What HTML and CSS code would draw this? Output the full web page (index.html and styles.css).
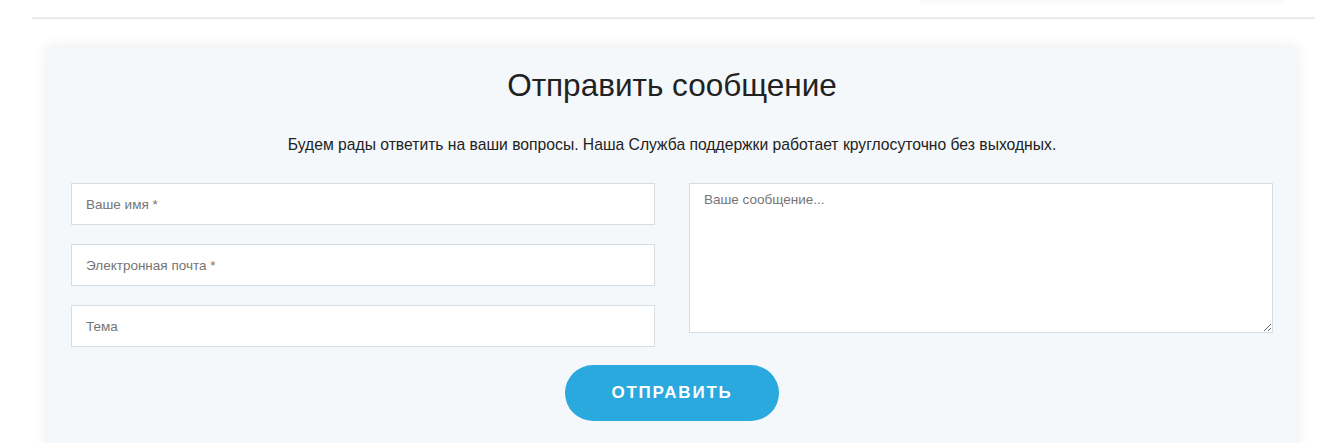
FILE: index.html
```html
<!DOCTYPE html>
<html lang="ru">
<head>
<meta charset="utf-8">
<title>Отправить сообщение</title>
<link rel="stylesheet" href="styles.css">
</head>
<body>
<div class="topbar"><div class="topbar-ghost"></div></div>
<div class="divider"></div>
<section class="card">
  <h2 class="title">Отправить сообщение</h2>
  <p class="subtitle">Будем рады ответить на ваши вопросы. Наша Служба поддержки работает круглосуточно без выходных.</p>
  <form class="form">
    <div class="fields">
      <input class="field" type="text" placeholder="Ваше имя *">
      <input class="field" type="email" placeholder="Электронная почта *">
      <input class="field" type="text" placeholder="Тема">
    </div>
    <textarea class="message" placeholder="Ваше сообщение..."></textarea>
  </form>
  <div class="actions"><button class="send" type="button">ОТПРАВИТЬ</button></div>
</section>
</body>
</html>
```
FILE: styles.css
```css
* { box-sizing: border-box; }
html, body { margin: 0; padding: 0; background: #ffffff; }
body {
  font-family: "Liberation Sans", Arial, sans-serif;
  color: #222;
  overflow: hidden;
  height: 443px;
}
.topbar {
  display: flex;
  justify-content: flex-end;
  height: 17px;
  padding-right: 44px;
}
.topbar-ghost {
  width: 363px;
  height: 3px;
  background: #fafafa;
  box-shadow: 0 1px 2px rgba(0,0,0,0.02);
}
.divider {
  height: 2px;
  margin: 0 12px 0 32px;
  background: #ebebeb;
  box-shadow: 0 1px 1px rgba(0,0,0,0.02);
}
.card {
  margin: 28px 0 0 47px;
  width: 1250px;
  padding: 20px 24px 40px;
  background: #f4f8fb;
  box-shadow: 0 0 14px rgba(0,0,0,0.08);
}
.title {
  margin: 0;
  text-align: center;
  font-size: 31.5px;
  line-height: 36px;
  font-weight: normal;
  color: #222;
}
.subtitle {
  margin: 32px 0 0;
  text-align: center;
  font-size: 15.7px;
  line-height: 20px;
  color: #222;
}
.form {
  margin-top: 28px;
  display: grid;
  grid-template-columns: 584px 584px;
  column-gap: 34px;
  align-items: start;
}
.fields {
  display: flex;
  flex-direction: column;
  gap: 19px;
}
.field, .message {
  display: block;
  width: 100%;
  border: 1px solid #d6dde3;
  background: #fff;
  font-family: "Liberation Sans", Arial, sans-serif;
  font-size: 13.5px;
  color: #333;
  outline: none;
  border-radius: 0;
  margin: 0;
}
.field {
  height: 42px;
  padding: 0 14px;
}
.message {
  height: 150px;
  padding: 8px 14px;
  resize: vertical;
}
.field::placeholder, .message::placeholder { color: #757575; opacity: 1; }
.actions {
  display: flex;
  justify-content: center;
  margin-top: 18px;
}
.send {
  width: 214px;
  height: 56px;
  border: none;
  border-radius: 28px;
  background: #2aa9df;
  color: #fff;
  font-family: "Liberation Sans", Arial, sans-serif;
  font-weight: bold;
  font-size: 17px;
  letter-spacing: 1.8px;
  cursor: pointer;
  padding: 0;
}
```
